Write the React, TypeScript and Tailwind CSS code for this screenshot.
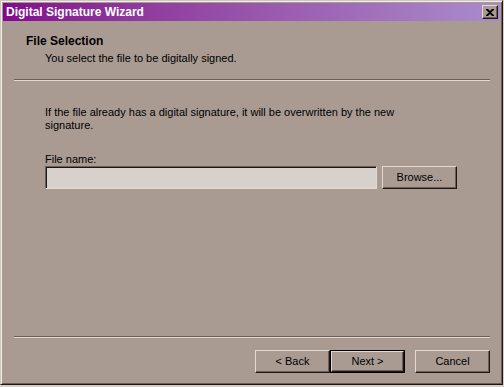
import { useState } from 'react';

const font = { fontFamily: '"Liberation Sans", Arial, sans-serif' };

function Button({ label, primary }: { label: string; primary?: boolean }) {
  const inner = (
    <div className="w-full h-full flex items-center justify-center border border-t-[#e2dad2] border-l-[#e2dad2] border-r-[#1e1614] border-b-[#1e1614] shadow-[inset_-1px_-1px_0_#6e5e56] text-[11px] text-black">
      {label}
    </div>
  );
  if (primary) {
    return <div className="w-[75px] h-[23px] border border-black">{inner}</div>;
  }
  return <div className="w-[75px] h-[23px]">{inner}</div>;
}

function Etched() {
  return <div className="h-[2px] border-t border-t-[#6e5e56] border-b border-b-[#e2dad2]" />;
}

export default function App() {
  const [fileName, setFileName] = useState('');

  return (
    <div className="w-[504px] h-[387px] bg-[#d4ccc6] overflow-hidden" style={font}>
      {/* window frame */}
      <div className="w-[503px] h-[385px] bg-[#a99b92] border-t border-l border-t-[#cfc6be] border-l-[#cfc6be] border-r border-b border-r-[#1e1614] border-b-[#1e1614] shadow-[inset_1px_1px_0_#f2ede8,inset_-1px_-1px_0_#6e5e56] p-[2px] flex flex-col">
        {/* title bar */}
        <div className="h-[18px] flex items-center justify-between bg-gradient-to-r from-[#82068c] to-[#a98ccc] pl-[3px] pr-[2px]">
          <span className="text-white font-bold text-[12px] leading-none">Digital Signature Wizard</span>
          <div className="w-[16px] h-[14px] flex items-center justify-center border border-t-[#e2dad2] border-l-[#e2dad2] border-r-[#1e1614] border-b-[#1e1614] shadow-[inset_-1px_-1px_0_#6e5e56] bg-[#a99b92]">
            <svg width="8" height="7" viewBox="0 0 8 7">
              <path d="M0 0h2l2 2 2-2h2v1L5 3.5 8 6v1H6L4 5 2 7H0V6l3-2.5L0 1z" fill="#000" />
            </svg>
          </div>
        </div>

        {/* header */}
        <div className="h-[58px] pt-[13px] pl-[23px]">
          <div className="font-bold text-[12px] text-black leading-[14px]">File Selection</div>
          <div className="pl-[19px] mt-[3px] text-[11px] text-black leading-[14px]">
            You select the file to be digitally signed.
          </div>
        </div>
        <div className="ml-[11px] mr-[10px]">
          <Etched />
        </div>

        {/* body */}
        <div className="pl-[42px] pr-[42px] pt-[25px] flex-1 text-[11px] text-black">
          <p className="w-[370px] leading-[13px]">
            If the file already has a digital signature, it will be overwritten by the new signature.
          </p>
          <div className="mt-[21px] leading-[13px]">File name:</div>
          <div className="flex gap-[5px]">
            <input
              value={fileName}
              onChange={(e) => setFileName(e.target.value)}
              className="w-[332px] h-[23px] bg-[#d8d0ca] border border-t-[#6e5e56] border-l-[#6e5e56] border-b-[#e2dad2] border-r-[#e2dad2] shadow-[inset_1px_1px_0_#1e1614] outline-none px-1 text-[11px]"
            />
            <Button label="Browse..." />
          </div>
        </div>

        <div className="ml-[11px] mr-[10px]">
          <Etched />
        </div>

        {/* footer buttons */}
        <div className="h-[44px] pt-[12px] flex justify-end pr-[10px]">
          <Button label="< Back" />
          <Button label="Next >" primary />
          <div className="w-[10px]" />
          <Button label="Cancel" />
        </div>
      </div>
    </div>
  );
}
